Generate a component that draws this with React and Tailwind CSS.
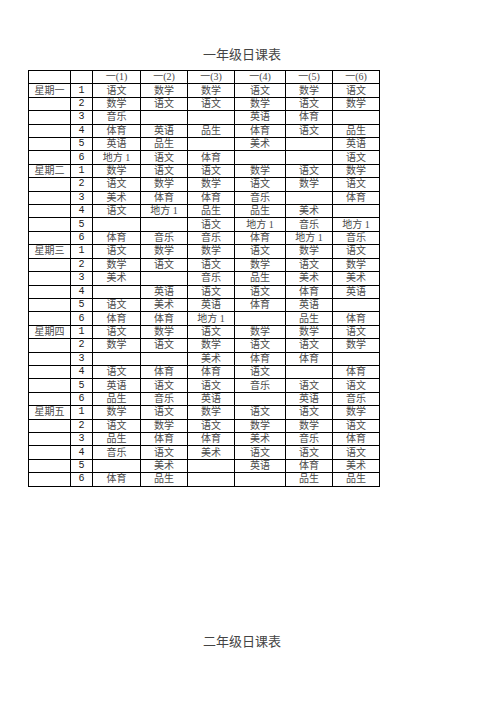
import React from 'react';

const days = [
  {
    name: '星期一',
    rows: [
      ['语文', '数学', '数学', '语文', '数学', '语文'],
      ['数学', '语文', '语文', '数学', '语文', '数学'],
      ['音乐', '', '', '英语', '体育', ''],
      ['体育', '英语', '品生', '体育', '语文', '品生'],
      ['英语', '品生', '', '美术', '', '英语'],
      ['地方 1', '语文', '体育', '', '', '语文'],
    ],
  },
  {
    name: '星期二',
    rows: [
      ['数学', '语文', '语文', '数学', '语文', '数学'],
      ['语文', '数学', '数学', '语文', '数学', '语文'],
      ['美术', '体育', '体育', '音乐', '', '体育'],
      ['语文', '地方 1', '品生', '品生', '美术', ''],
      ['', '', '语文', '地方 1', '音乐', '地方 1'],
      ['体育', '音乐', '音乐', '体育', '地方 1', '音乐'],
    ],
  },
  {
    name: '星期三',
    rows: [
      ['语文', '数学', '数学', '语文', '数学', '语文'],
      ['数学', '语文', '语文', '数学', '语文', '数学'],
      ['美术', '', '音乐', '品生', '美术', '美术'],
      ['', '英语', '语文', '语文', '体育', '英语'],
      ['语文', '美术', '英语', '体育', '英语', ''],
      ['体育', '体育', '地方 1', '', '品生', '体育'],
    ],
  },
  {
    name: '星期四',
    rows: [
      ['语文', '数学', '语文', '数学', '数学', '语文'],
      ['数学', '语文', '数学', '语文', '语文', '数学'],
      ['', '', '美术', '体育', '体育', ''],
      ['语文', '体育', '体育', '语文', '', '体育'],
      ['英语', '语文', '语文', '音乐', '语文', '语文'],
      ['品生', '音乐', '英语', '', '英语', '音乐'],
    ],
  },
  {
    name: '星期五',
    rows: [
      ['数学', '语文', '数学', '语文', '语文', '数学'],
      ['语文', '数学', '语文', '数学', '数学', '语文'],
      ['品生', '体育', '体育', '美术', '音乐', '体育'],
      ['音乐', '语文', '美术', '语文', '语文', '语文'],
      ['', '美术', '', '英语', '体育', '美术'],
      ['体育', '品生', '', '', '品生', '品生'],
    ],
  },
];

const classes = ['一(1)', '一(2)', '一(3)', '一(4)', '一(5)', '一(6)'];

const cjk = { fontFamily: '"Liberation Serif", "Noto Sans CJK SC", serif' };

const Cell = ({ children, className = '' }) => (
  <td className={`border border-black p-0 h-[13.42px] leading-[12px] text-center align-middle whitespace-nowrap ${className}`}>
    {children}
  </td>
);

const App = () => {
  return (
    <div className="w-[496px] h-[702px] bg-white overflow-hidden text-[#4a4a4a]" style={cjk}>
      <div className="pt-[46px] pl-[203px] h-[70px] text-[13px] leading-[18px] text-[#444]">一年级日课表</div>
      <table className="ml-[28px] border-collapse table-fixed text-[10px] w-[351px]">
        <colgroup>
          <col className="w-[42px]" />
          <col className="w-[22px]" />
          <col className="w-[48px]" />
          <col className="w-[47px]" />
          <col className="w-[47px]" />
          <col className="w-[51px]" />
          <col className="w-[47px]" />
          <col className="w-[47px]" />
        </colgroup>
        <tbody>
          <tr>
            <Cell />
            <Cell />
            {classes.map((c) => (
              <Cell key={c}>{c}</Cell>
            ))}
          </tr>
          {days.map((day) =>
            day.rows.map((row, i) => (
              <tr key={day.name + i}>
                <Cell>{i === 0 ? day.name : ''}</Cell>
                <Cell className="text-[#222] font-['Liberation_Mono']">{i + 1}</Cell>
                {row.map((s, j) => (
                  <Cell key={j}>{s}</Cell>
                ))}
              </tr>
            ))
          )}
        </tbody>
      </table>
      <div className="mt-[146px] pl-[203px] text-[13px] leading-[18px] text-[#444]">二年级日课表</div>
    </div>
  );
};

export default App;
